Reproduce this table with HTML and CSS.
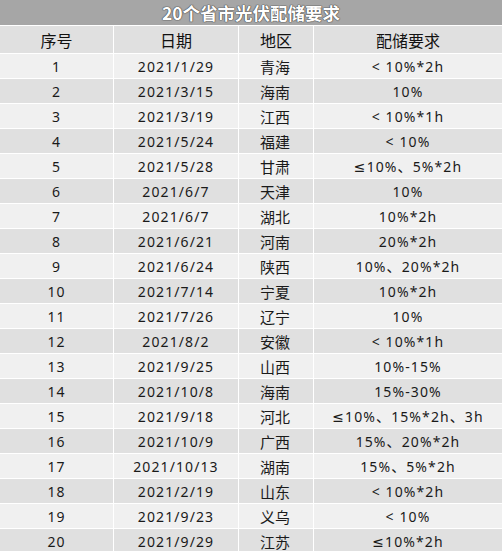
FILE: index.html
```html
<!DOCTYPE html>
<html lang="zh">
<head>
<meta charset="utf-8">
<title>20个省市光伏配储要求</title>
<link rel="stylesheet" href="styles.css">
</head>
<body>
<div class="sheet">
  <div class="title">20个省市光伏配储要求</div>
  <div class="grid">
    <div class="cell head">序号</div><div class="cell head">日期</div><div class="cell head">地区</div><div class="cell head">配储要求</div>
    <div class="cell a">1</div><div class="cell a">2021/1/29</div><div class="cell a cn">青海</div><div class="cell a">&lt; 10%*2h</div>
    <div class="cell b">2</div><div class="cell b">2021/3/15</div><div class="cell b cn">海南</div><div class="cell b">10%</div>
    <div class="cell a">3</div><div class="cell a">2021/3/19</div><div class="cell a cn">江西</div><div class="cell a">&lt; 10%*1h</div>
    <div class="cell b">4</div><div class="cell b">2021/5/24</div><div class="cell b cn">福建</div><div class="cell b">&lt; 10%</div>
    <div class="cell a">5</div><div class="cell a">2021/5/28</div><div class="cell a cn">甘肃</div><div class="cell a">≤10%、5%*2h</div>
    <div class="cell b">6</div><div class="cell b">2021/6/7</div><div class="cell b cn">天津</div><div class="cell b">10%</div>
    <div class="cell a">7</div><div class="cell a">2021/6/7</div><div class="cell a cn">湖北</div><div class="cell a">10%*2h</div>
    <div class="cell b">8</div><div class="cell b">2021/6/21</div><div class="cell b cn">河南</div><div class="cell b">20%*2h</div>
    <div class="cell a">9</div><div class="cell a">2021/6/24</div><div class="cell a cn">陕西</div><div class="cell a">10%、20%*2h</div>
    <div class="cell b">10</div><div class="cell b">2021/7/14</div><div class="cell b cn">宁夏</div><div class="cell b">10%*2h</div>
    <div class="cell a">11</div><div class="cell a">2021/7/26</div><div class="cell a cn">辽宁</div><div class="cell a">10%</div>
    <div class="cell b">12</div><div class="cell b">2021/8/2</div><div class="cell b cn">安徽</div><div class="cell b">&lt; 10%*1h</div>
    <div class="cell a">13</div><div class="cell a">2021/9/25</div><div class="cell a cn">山西</div><div class="cell a">10%-15%</div>
    <div class="cell b">14</div><div class="cell b">2021/10/8</div><div class="cell b cn">海南</div><div class="cell b">15%-30%</div>
    <div class="cell a">15</div><div class="cell a">2021/9/18</div><div class="cell a cn">河北</div><div class="cell a">≤10%、15%*2h、3h</div>
    <div class="cell b">16</div><div class="cell b">2021/10/9</div><div class="cell b cn">广西</div><div class="cell b">15%、20%*2h</div>
    <div class="cell a">17</div><div class="cell a">2021/10/13</div><div class="cell a cn">湖南</div><div class="cell a">15%、5%*2h</div>
    <div class="cell b">18</div><div class="cell b">2021/2/19</div><div class="cell b cn">山东</div><div class="cell b">&lt; 10%*2h</div>
    <div class="cell a">19</div><div class="cell a">2021/9/23</div><div class="cell a cn">义乌</div><div class="cell a">&lt; 10%</div>
    <div class="cell b">20</div><div class="cell b">2021/9/29</div><div class="cell b cn">江苏</div><div class="cell b">≤10%*2h</div>
  </div>
</div>
</body>
</html>
```
FILE: styles.css
```css
html, body {
  margin: 0;
  padding: 0;
  background: #ffffff;
}
body {
  font-family: "Noto Sans", "DejaVu Sans", "Noto Sans CJK SC", sans-serif;
  color: #1a1a1a;
  width: 502px;
  height: 551px;
  overflow: hidden;
}
.sheet {
  display: flex;
  flex-direction: column;
  gap: 1px;
}
.title {
  height: 25px;
  background: #a6a6a6;
  color: #ffffff;
  font-family: "Noto Sans CJK SC", sans-serif;
  font-weight: 700;
  font-size: 17.5px;
  line-height: 25px;
  text-align: center;
  text-shadow: 0 0 1px #444, 0 0 1px #444, 0 0 1px #444;
}
.grid {
  display: grid;
  grid-template-columns: 113px 124px 74px 188px;
  grid-auto-rows: 24px;
  grid-template-rows: 27px;
  column-gap: 1px;
  row-gap: 1px;
}
.cell {
  display: flex;
  align-items: center;
  justify-content: center;
  font-size: 14px;
  letter-spacing: 1.1px;
  white-space: nowrap;
}
.head {
  background: #e0e0e0;
  font-family: "Noto Sans CJK SC", sans-serif;
  font-size: 16px;
  letter-spacing: 0;
  color: #111;
}
.cn {
  font-family: "Noto Sans CJK SC", sans-serif;
  letter-spacing: 0;
  font-size: 15px;
  justify-content: flex-start;
  padding-left: 21px;
}
.a { background: #f0f0f0; }
.b { background: #e0e0e0; }
```
